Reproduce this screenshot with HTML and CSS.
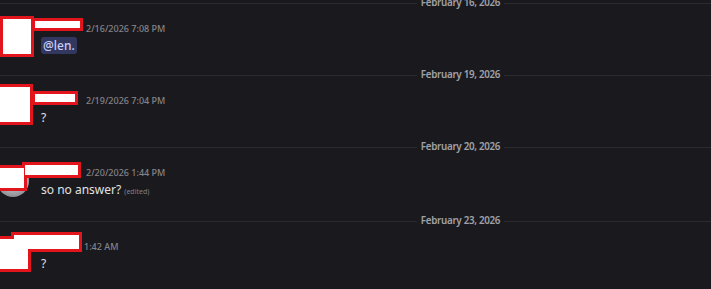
FILE: index.html
```html
<!DOCTYPE html>
<html lang="en">
<head>
<meta charset="utf-8">
<title>Chat</title>
<link rel="stylesheet" href="styles.css">
</head>
<body>
<div class="chat">

  <div class="divider first"><span class="divider-label">February 16, 2026</span></div>
  <div class="message">
    <div class="avatar"></div>
    <div class="content">
      <div class="header"><span class="username name-a"></span><span class="timestamp">2/16/2026 7:08 PM</span></div>
      <div class="body"><span class="mention">@len.</span></div>
    </div>
    <div class="censor">
      <span class="box m1-avatar"></span>
      <span class="box m1-name"></span>
    </div>
  </div>

  <div class="divider"><span class="divider-label">February 19, 2026</span></div>
  <div class="message">
    <div class="avatar"></div>
    <div class="content">
      <div class="header"><span class="username name-a"></span><span class="timestamp">2/19/2026 7:04 PM</span></div>
      <div class="body">?</div>
    </div>
    <div class="censor">
      <span class="box m2-avatar"></span>
      <span class="box m2-name"></span>
    </div>
  </div>

  <div class="divider"><span class="divider-label">February 20, 2026</span></div>
  <div class="message">
    <div class="avatar"></div>
    <div class="content">
      <div class="header"><span class="username name-a"></span><span class="timestamp">2/20/2026 1:44 PM</span></div>
      <div class="body">so no answer? <span class="edited">(edited)</span></div>
    </div>
    <div class="censor">
      <span class="box m3-avatar"></span>
      <span class="box m3-name"></span>
    </div>
  </div>

  <div class="divider"><span class="divider-label">February 23, 2026</span></div>
  <div class="message">
    <div class="avatar"></div>
    <div class="content">
      <div class="header"><span class="username name-b"></span><span class="timestamp">1:42 AM</span></div>
      <div class="body">?</div>
    </div>
    <div class="censor">
      <span class="box m4-avatar"></span>
      <span class="box m4-name"></span>
    </div>
  </div>

</div>
</body>
</html>
```

FILE: styles.css
```css
html, body {
  margin: 0;
  padding: 0;
  background: #1a1a1e;
  overflow: hidden;
}

body {
  font-family: "Noto Sans", "DejaVu Sans", sans-serif;
  color: #dbdee1;
}

.chat {
  width: 921px;
}

.divider {
  display: flex;
  align-items: center;
  height: 14px;
}

.divider.first {
  margin-top: -4px;
}

.divider::before,
.divider::after {
  content: "";
  flex: 1;
  height: 1px;
  background: #2a2a2f;
}

.divider-label {
  padding: 0 4px;
  font-size: 9.8px;
  font-weight: 600;
  letter-spacing: -0.3px;
  line-height: 14px;
  color: #a0a1a8;
}

.message {
  position: relative;
  display: flex;
  align-items: flex-start;
  padding: 11px 0 14px;
}

.avatar {
  flex-shrink: 0;
  width: 32px;
  height: 32px;
  margin-left: -3px;
  margin-right: 12px;
  border-radius: 50%;
  background: radial-gradient(circle at 50% 40%, #e4e4e8 0%, #a9aab0 55%, #6e6f76 100%);
}

.content {
  flex: 1;
  min-width: 0;
}

.header {
  display: flex;
  align-items: baseline;
  height: 16px;
  line-height: 16px;
}

/* the user name is hidden under the censor box */
.username {
  margin-right: 4px;
}

.name-a { width: 41px; }
.name-b { width: 39px; }

.timestamp {
  font-size: 9px;
  font-weight: 500;
  color: #83848b;
}

.body {
  font-size: 12px;
  line-height: 17px;
  color: #e0e2e5;
}

.mention {
  display: inline-block;
  padding: 0 2px;
  line-height: 17px;
  border-radius: 3px;
  font-weight: 500;
  color: #c9cdfb;
  background: #32375f;
}

.edited {
  font-size: 7px;
  color: #7f8088;
}

/* censor boxes drawn over the user's avatar and name */
.censor {
  position: absolute;
  inset: 0;
  z-index: 1;
  pointer-events: none;
}

.box {
  position: absolute;
  border: 3px solid #e3151c;
}

.box::before {
  content: "";
  position: absolute;
  inset: 0;
  z-index: 1;
  background: #ffffff;
}

.m1-avatar { left: 0;    top: 6px;  width: 28px; height: 35px; }
.m1-name   { left: 32px; top: 8px;  width: 45px; height: 7px; }

.m2-avatar { left: -3px; top: 2px;  width: 30px; height: 35px; }
.m2-name   { left: 32px; top: 9px;  width: 40px; height: 8px; }

.m3-avatar { left: -3px; top: 11px; width: 24px; height: 20px; }
.m3-name   { left: 22px; top: 8px;  width: 53px; height: 10px; }

.m4-avatar { left: -3px; top: 8px;  width: 28px; height: 30px; }
.m4-name   { left: 11px; top: 4px;  width: 65px; height: 14px; }
```
